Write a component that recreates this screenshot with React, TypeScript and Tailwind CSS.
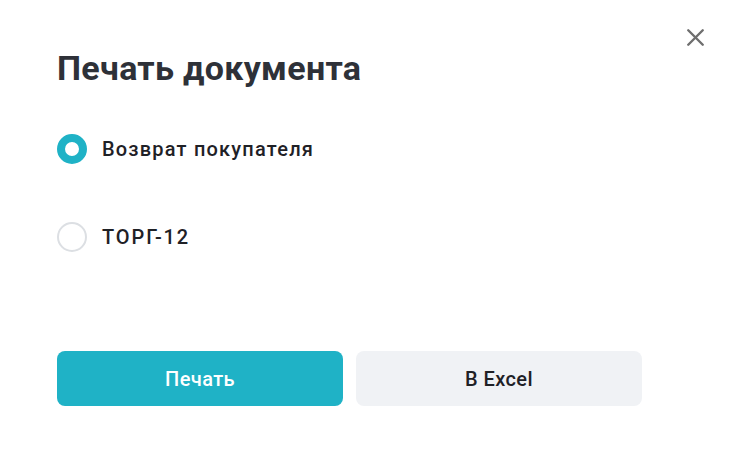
import { X } from 'lucide-react';

export default function App() {
  return (
    <div className="relative w-[732px] h-[468px] bg-white font-['Roboto',sans-serif]">
      <button className="absolute right-[22px] top-[23px] text-[#6f6f6f]">
        <X size={29} strokeWidth={2} />
      </button>
      <div className="pl-[57px] pt-[48px] w-[642px]">
        <h1 className="text-[34px] leading-[40px] font-bold tracking-[0.3px] text-[#2e3138]">Печать документа</h1>
        <div className="mt-[46px] flex flex-col gap-[58px]">
          <label className="flex items-center gap-[15px]">
            <span className="w-[30px] h-[30px] rounded-full border-[8px] border-[#1fb2c6] bg-white" />
            <span className="text-[20px] font-medium tracking-[1.2px] text-[#1f2126]">Возврат покупателя</span>
          </label>
          <label className="flex items-center gap-[15px]">
            <span className="w-[30px] h-[30px] rounded-full border-2 border-[#dcdfe3] bg-white" />
            <span className="text-[20px] font-medium tracking-[1.9px] text-[#1f2126]">ТОРГ-12</span>
          </label>
        </div>
        <div className="mt-[99px] grid grid-cols-2 gap-[13px]">
          <button className="h-[55px] rounded-[8px] bg-[#1fb2c6] text-white text-[20px] font-medium tracking-[0.4px]">Печать</button>
          <button className="h-[55px] rounded-[8px] bg-[#f0f2f5] text-[#1f2126] text-[20px] font-medium tracking-[0.4px]">В Excel</button>
        </div>
      </div>
    </div>
  );
}
